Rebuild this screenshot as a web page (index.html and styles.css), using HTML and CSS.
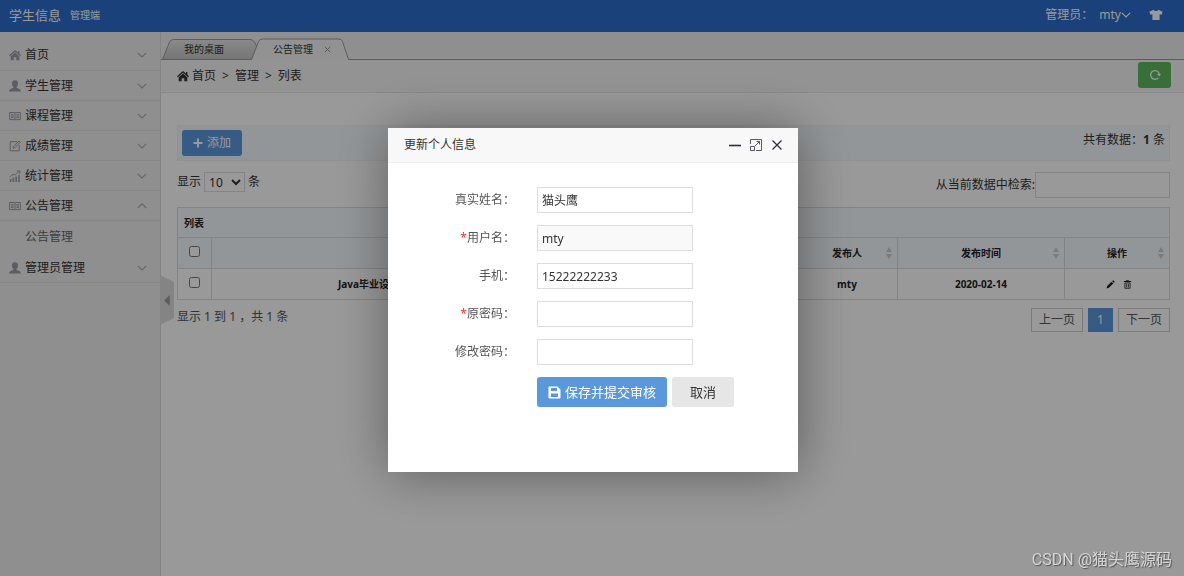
FILE: index.html
```html
<!DOCTYPE html>
<html lang="zh-CN">
<head>
<meta charset="utf-8">
<title>学生信息管理端</title>
<link rel="stylesheet" href="styles.css">
</head>
<body>
<svg class="sprite" aria-hidden="true">
  <symbol id="i-home" viewBox="0 0 12 12"><path d="M6 1 L9 3.6 V2 H10.4 V4.8 L12 6.3 L11.2 7.2 L6 2.8 L.8 7.2 L0 6.3Z"/><path d="M6 3.6 L10.3 7.2 V11.2 H7.3 V8.2 H4.7 V11.2 H1.7 V7.2Z"/></symbol>
  <symbol id="i-user" viewBox="0 0 12 12"><path d="M6 .2C8.2 .2 9.1 1.7 9 3.7 8.9 5.2 8.3 6.3 7.5 6.9V7.8C8.6 8.4 11.8 9 11.9 11.4H.1C.2 9 3.4 8.4 4.5 7.8V6.9C3.7 6.3 3.1 5.2 3 3.7 2.9 1.7 3.8 .2 6 .2Z"/></symbol>
  <symbol id="i-book" viewBox="0 0 12 12"><path d="M.6 2.5H5.3L6 3 6.7 2.5H11.4V9.6H6.8L6 10 5.2 9.6H.6ZM6 3V10M2 4.6H4.6M2 6.1H4.6M2 7.6H4.6M7.4 4.6H10M7.4 6.1H10M7.4 7.6H10" fill="none" stroke="currentColor"/></symbol>
  <symbol id="i-edit" viewBox="0 0 12 12"><path d="M8 1.7H1.2V10.8H10.2V5M4 8.2L4.4 6.4 10 1 11.2 2.2 5.8 7.7Z" fill="none" stroke="currentColor"/></symbol>
  <symbol id="i-chart" viewBox="0 0 12 12"><path d="M.8 9H2.4V12H.8ZM3.6 7.6H5.2V12H3.6ZM6.4 6.6H8V12H6.4ZM9.2 5H10.8V12H9.2Z"/><path d="M.5 7.2L4 4.4 6.4 5 10.4 1M7.8 1H10.8V3.8" fill="none" stroke="currentColor"/></symbol>
  <symbol id="i-down" viewBox="0 0 10 10"><path d="M.8 2.8L5 7 9.2 2.8" fill="none" stroke="currentColor" stroke-width="1.1"/></symbol>
  <symbol id="i-up" viewBox="0 0 10 10"><path d="M.8 7L5 2.8 9.2 7" fill="none" stroke="currentColor" stroke-width="1.1"/></symbol>
  <symbol id="i-sort" viewBox="0 0 8 14"><path d="M4 1L7 6H1ZM4 13L1 8H7Z"/></symbol>
</svg>

<header class="topbar">
  <a class="brand" href="#">学生信息</a>
  <span class="edition">管理端</span>
  <div class="account">
    <span>管理员：</span>
    <button class="account-btn" type="button">mty<svg class="ico10"><use href="#i-down"/></svg></button>
    <button class="skin-btn" type="button" aria-label="换肤"><svg viewBox="0 0 14 12"><path d="M4.6.8C5.4 2.4 8.6 2.4 9.4.8L13.6 2.8 12.6 5.8 10.6 5.2V11H3.4V5.2L1.4 5.8.4 2.8Z"/></svg></button>
  </div>
</header>

<div class="shell">
  <aside class="sidebar">
    <nav class="menu">
      <a class="menu-item" href="#"><svg class="ico12"><use href="#i-home"/></svg><span>首页</span><svg class="ico10"><use href="#i-down"/></svg></a>
      <a class="menu-item" href="#"><svg class="ico12"><use href="#i-user"/></svg><span>学生管理</span><svg class="ico10"><use href="#i-down"/></svg></a>
      <a class="menu-item" href="#"><svg class="ico12"><use href="#i-book"/></svg><span>课程管理</span><svg class="ico10"><use href="#i-down"/></svg></a>
      <a class="menu-item" href="#"><svg class="ico12"><use href="#i-edit"/></svg><span>成绩管理</span><svg class="ico10"><use href="#i-down"/></svg></a>
      <a class="menu-item" href="#"><svg class="ico12"><use href="#i-chart"/></svg><span>统计管理</span><svg class="ico10"><use href="#i-down"/></svg></a>
      <a class="menu-item" href="#"><svg class="ico12"><use href="#i-book"/></svg><span>公告管理</span><svg class="ico10"><use href="#i-up"/></svg></a>
      <a class="submenu-item" href="#">公告管理</a>
      <a class="menu-item" href="#"><svg class="ico12"><use href="#i-user"/></svg><span>管理员管理</span><svg class="ico10"><use href="#i-down"/></svg></a>
    </nav>
    <button class="collapse" type="button" aria-label="收起菜单"><svg viewBox="0 0 6 12"><path d="M6 0V12L0 6Z"/></svg></button>
  </aside>

  <main class="main">
    <div class="tabs">
      <a class="tab" href="#">
        <svg class="tab-shape" viewBox="0 0 96 22"><defs><linearGradient id="g" x1="0" y1="0" x2="0" y2="1"><stop offset="0" stop-color="#e6e6e6"/><stop offset="1" stop-color="#c4c4c4"/></linearGradient></defs><path d="M.5 21.5L7.5 4Q8.7 1.5 11.5 1.5H88Q91 1.5 92.5 4L96 11 91 21.5Z" fill="url(#g)" stroke="#999"/></svg>
        <span>我的桌面</span>
      </a>
      <a class="tab tab-active" href="#">
        <svg class="tab-shape" viewBox="0 0 98 22"><path d="M.5 22L7.5 3.5Q8.5 1 11.5 1H88Q90.5 1 91.5 3.5L97.5 22Z" fill="#f3f3f3"/><path d="M.5 21.5L7.5 3.5Q8.5 1 11.5 1H88Q90.5 1 91.5 3.5L97.5 21.5" fill="none" stroke="#999"/></svg>
        <span>公告管理</span>
        <svg class="tab-close" viewBox="0 0 7 7"><path d="M.8.8L6.2 6.2M6.2.8L.8 6.2"/></svg>
      </a>
    </div>

    <div class="crumbs">
      <svg class="ico12"><use href="#i-home"/></svg>
      <a href="#">首页</a><span>&gt;</span><a href="#">管理</a><span>&gt;</span><span>列表</span>
      <button class="refresh" type="button" aria-label="刷新"><svg viewBox="0 0 12 12"><path d="M9.4 8.8A4.4 4.4 0 1 1 10.3 5" fill="none" stroke="currentColor" stroke-width="1.3"/><path d="M8 5H12L10.4 7.4Z"/></svg></button>
    </div>

    <section class="content">
      <div class="toolbar">
        <button class="add" type="button"><svg viewBox="0 0 10 10"><path d="M5 .5V9.5M.5 5H9.5"/></svg>添加</button>
        <span class="total">共有数据：<strong>1</strong> 条</span>
      </div>

      <div class="filters">
        <label class="length">显示 <select><option>10</option></select> 条</label>
        <label class="search">从当前数据中检索:<input type="text"></label>
      </div>

      <table class="grid">
        <colgroup><col class="c-check"><col><col class="c-wide"><col class="c-author"><col class="c-wide"><col class="c-ops"></colgroup>
        <thead>
          <tr><th class="caption" colspan="6">列表</th></tr>
          <tr>
            <th><input type="checkbox" aria-label="全选"></th>
            <th></th>
            <th></th>
            <th><div class="sortable">发布人<svg><use href="#i-sort"/></svg></div></th>
            <th><div class="sortable">发布时间<svg><use href="#i-sort"/></svg></div></th>
            <th><div class="sortable">操作<svg><use href="#i-sort"/></svg></div></th>
          </tr>
        </thead>
        <tbody>
          <tr>
            <td><input type="checkbox" aria-label="选择"></td>
            <td class="title">Java毕业设</td>
            <td></td>
            <td>mty</td>
            <td>2020-02-14</td>
            <td>
              <div class="ops">
                <button type="button" aria-label="编辑"><svg viewBox="0 0 10 10"><path d="M.6 9.4L1.3 6.8 6.2 1.9 8.1 3.8 3.2 8.7ZM6.8 1.3L7.6.5Q8.1.2 8.6.7L9.3 1.4Q9.8 1.9 9.3 2.5L8.7 3.2Z"/></svg></button>
                <button type="button" aria-label="删除"><svg viewBox="0 0 10 10"><path d="M3.5 1V.3H6.5V1H9V2.3H1V1Z"/><path d="M2.1 3.2H7.9V9.2H2.1ZM4 4.2V8.2M6 4.2V8.2" fill="none" stroke="currentColor" stroke-width=".9"/></svg></button>
              </div>
            </td>
          </tr>
        </tbody>
      </table>

      <div class="footer">
        <span>显示 1 到 1 ，共 1 条</span>
        <div class="pager"><a href="#">上一页</a><a class="current" href="#">1</a><a href="#">下一页</a></div>
      </div>
    </section>
  </main>
</div>

<div class="shade">
  <section class="dialog" role="dialog" aria-labelledby="dlg-title">
    <div class="dialog-head">
      <h2 id="dlg-title">更新个人信息</h2>
      <button type="button" aria-label="最小化"><svg viewBox="0 0 12 12"><path d="M0 6.5H12" stroke-width="1.6"/></svg></button>
      <button type="button" aria-label="最大化"><svg viewBox="0 0 12 12"><path d="M.5 5V.5H11.5V11.5H6M.5 7.5H4.5V11.5H.5ZM5 7L9.5 2.5M6.5 2.5H9.5V5.5" stroke-width=".8"/></svg></button>
      <button type="button" aria-label="关闭"><svg viewBox="0 0 12 12"><path d="M1.5 1.5L10.5 10.5M10.5 1.5L1.5 10.5" stroke-width="1.3"/></svg></button>
    </div>
    <form class="form">
      <label for="f-name">真实姓名：</label><input id="f-name" type="text" value="猫头鹰">
      <label for="f-user"><i>*</i>用户名：</label><input id="f-user" type="text" value="mty" readonly>
      <label for="f-phone">手机：</label><input id="f-phone" type="text" value="15222222233">
      <label for="f-old"><i>*</i>原密码：</label><input id="f-old" type="password">
      <label for="f-new">修改密码：</label><input id="f-new" type="password">
      <div class="actions">
        <button class="save" type="submit"><svg viewBox="0 0 13 13"><path fill-rule="evenodd" d="M1 .5H9.5L12.5 3.5V11.5Q12.5 12.5 11.5 12.5H1.5Q.5 12.5 .5 11.5V1Q.5.5 1 .5ZM3 2V5H9V2ZM3 7.5V11H10V7.5Z"/></svg>保存并提交审核</button>
        <button class="cancel" type="button">取消</button>
      </div>
    </form>
  </section>
</div>
<div class="watermark">CSDN @猫头鹰源码</div>
</body>
</html>
```
FILE: styles.css
```css
* { box-sizing: border-box; }

body {
  margin: 0;
  min-height: 100vh;
  display: flex;
  flex-direction: column;
  font: 12px/18px "Noto Sans", "Noto Sans CJK SC", sans-serif;
  color: #333;
  background: #fff;
}

a { color: inherit; text-decoration: none; }
button, input, select { font: inherit; color: inherit; }
button { border: 0; padding: 0; background: none; cursor: pointer; }
svg { flex: none; fill: currentColor; }
.sprite { position: absolute; width: 0; height: 0; }
.ico12 { width: 12px; height: 12px; }
.ico10 { width: 10px; height: 10px; }

.topbar {
  height: 32px;
  display: flex;
  align-items: center;
  gap: 9px;
  padding: 0 21px 3px 9px;
  background: #2d6dcc;
  color: #fff;
}
.brand { font-size: 13px; }
.edition { font-size: 10px; }
.account { margin-left: auto; display: flex; align-items: center; gap: 6px; }
.account-btn { display: flex; align-items: center; }
.skin-btn { margin-left: 12px; display: flex; }
.skin-btn svg { width: 14px; height: 12px; }

.shell { flex: 1; display: flex; }

.sidebar {
  position: relative;
  flex: none;
  width: 161px;
  padding-top: 8px;
  background: #eee;
  border-right: 1px solid #ddd;
}
.menu { display: flex; flex-direction: column; }
.menu-item {
  height: 30px;
  display: flex;
  align-items: center;
  gap: 4px;
  padding: 0 13px 0 9px;
  border-bottom: 1px solid #e2e2e2;
}
.menu-item .ico12 { color: #9a9ca6; }
.menu-item .ico10 { margin-left: auto; color: #aaa; }
.submenu-item { padding: 7px 0 7px 25px; color: #666; }
.menu-item:first-child { height: 31px; }

.collapse {
  position: absolute;
  top: 243px;
  left: 100%;
  width: 14px;
  height: 50px;
  display: flex;
  align-items: center;
  justify-content: center;
  background: #dcdcdc;
  color: #999;
  clip-path: polygon(0 0, 100% 14%, 100% 86%, 0 100%);
}
.collapse svg { width: 6px; height: 11px; }

.main { flex: 1; min-width: 0; }

.tabs {
  height: 28px;
  display: flex;
  align-items: flex-end;
  padding-left: 1px;
  background: #eee;
  border-bottom: 1px solid #999;
}
.tab {
  position: relative;
  width: 96px;
  height: 22px;
  margin-bottom: -1px;
  display: flex;
  align-items: center;
  padding-left: 22px;
  font-size: 10px;
}
.tab span { position: relative; }
.tab-active { width: 98px; margin-left: -7px; }
.tab-shape { position: absolute; inset: 0; width: 100%; height: 100%; }
.tab-close { position: relative; width: 7px; height: 7px; margin-left: 11px; fill: none; stroke: #999; }

.crumbs {
  height: 33px;
  display: flex;
  align-items: center;
  gap: 6px;
  padding: 0 13px 0 16px;
  background: #f5f5f5;
  border-bottom: 1px solid #e5e5e5;
}
.crumbs .ico12 { margin-right: -3px; }
.refresh {
  width: 33px;
  height: 26px;
  margin: 0 0 2px auto;
  display: flex;
  align-items: center;
  justify-content: center;
  border-radius: 3px;
  background: #5eb95e;
  color: #fff;
}
.refresh svg { width: 12px; height: 12px; }

.content { padding: 32px 14px 0 16px; }

.toolbar {
  display: flex;
  align-items: center;
  justify-content: space-between;
  padding: 4px;
  background: #f5fafe;
  border: 1px solid #eef3f6;
}
.add {
  height: 26px;
  display: flex;
  align-items: center;
  gap: 4px;
  padding: 0 11px;
  border-radius: 3px;
  background: #5a98de;
  color: #fff;
}
.add svg { width: 10px; height: 10px; stroke: currentColor; stroke-width: 2; }
.total { padding-bottom: 6px; }

.filters { display: flex; justify-content: space-between; padding-top: 11px; }
.length { display: flex; align-items: center; gap: 3px; height: 20px; }
.length select {
  width: 41px;
  height: 20px;
  padding: 0;
  border: 1px solid #ddd;
  background: #fff;
  line-height: 18px;
}
.search { display: flex; align-items: center; }
.search input { width: 135px; height: 26px; border: 1px solid #ddd; background: #fff; }

.grid {
  width: 100%;
  margin-top: 9px;
  table-layout: fixed;
  border-collapse: collapse;
  font-size: 10px;
  font-weight: bold;
  text-align: center;
  color: #222;
}
.grid th, .grid td { height: 31px; padding: 0 6px; border: 1px solid #ddd; }
.grid thead { background: #f5fafe; }
.grid .caption { text-align: left; height: 30px; }
.grid .title { padding-left: 126px; text-align: left; white-space: nowrap; }
.grid input { display: block; width: 11px; height: 11px; margin: -3px auto 0; }
.c-check { width: 34px; }
.c-wide { width: 167px; }
.c-author { width: 101px; }
.c-ops { width: 105px; }
.sortable { display: flex; align-items: center; justify-content: center; position: relative; }
.sortable svg { position: absolute; right: -2px; width: 8px; height: 14px; color: #ccc; }
.ops { display: flex; justify-content: center; gap: 8px; padding-left: 4px; }
.ops button { display: flex; }
.ops svg { width: 9px; height: 9px; }

.footer { display: flex; justify-content: space-between; align-items: flex-start; padding-top: 8px; color: #555; }
.pager { display: flex; gap: 5px; }
.pager a { height: 24px; padding: 0 7px; border: 1px solid #ccc; line-height: 22px; }
.pager .current { padding: 0 8px; background: #5a98de; border-color: #5a98de; color: #fff; }

.shade {
  position: fixed;
  inset: 0;
  display: flex;
  align-items: center;
  justify-content: center;
  padding: 24px 0 0 2px;
  background: rgba(0, 0, 0, .4);
}
.dialog {
  width: 410px;
  min-height: 344px;
  background: #fff;
  box-shadow: 1px 1px 50px rgba(0, 0, 0, .4);
}
.dialog-head {
  height: 35px;
  display: flex;
  align-items: center;
  gap: 9px;
  padding: 0 15px 0 16px;
  background: #f8f8f8;
  border-bottom: 1px solid #eee;
}
.dialog-head h2 { margin: 0 auto 0 0; font-size: 12px; line-height: 18px; font-weight: normal; }
.dialog-head button { display: flex; color: #2e2d3c; }
.dialog-head svg { width: 12px; height: 12px; fill: none; stroke: currentColor; }

.form {
  display: grid;
  grid-template-columns: 127px 156px;
  gap: 12px 22px;
  padding-top: 24px;
  align-items: center;
}
.form label { text-align: right; color: #555; }
.form i { font-style: normal; color: #f33; }
.form input { width: 100%; height: 26px; padding: 0 4px; border: 1px solid #ddd; background: #fff; }
.form input:read-only { background: #f9f9f9; }
.actions { grid-column: 2; display: flex; gap: 5px; white-space: nowrap; }
.actions button {
  flex: none;
  height: 30px;
  display: flex;
  align-items: center;
  gap: 4px;
  border-radius: 3px;
  font-size: 13px;
}
.save { padding: 0 11px; background: #5a98de; color: #fff; }
.save svg { width: 13px; height: 13px; }
.cancel { padding: 0 18px; background: #e6e6e6; }

.watermark {
  position: fixed;
  right: 12px;
  bottom: 6px;
  font: 16px/20px Roboto, "Noto Sans CJK SC", sans-serif;
  color: #d6d6d6;
  text-shadow: 1px 1px 1px #555;
}
```
